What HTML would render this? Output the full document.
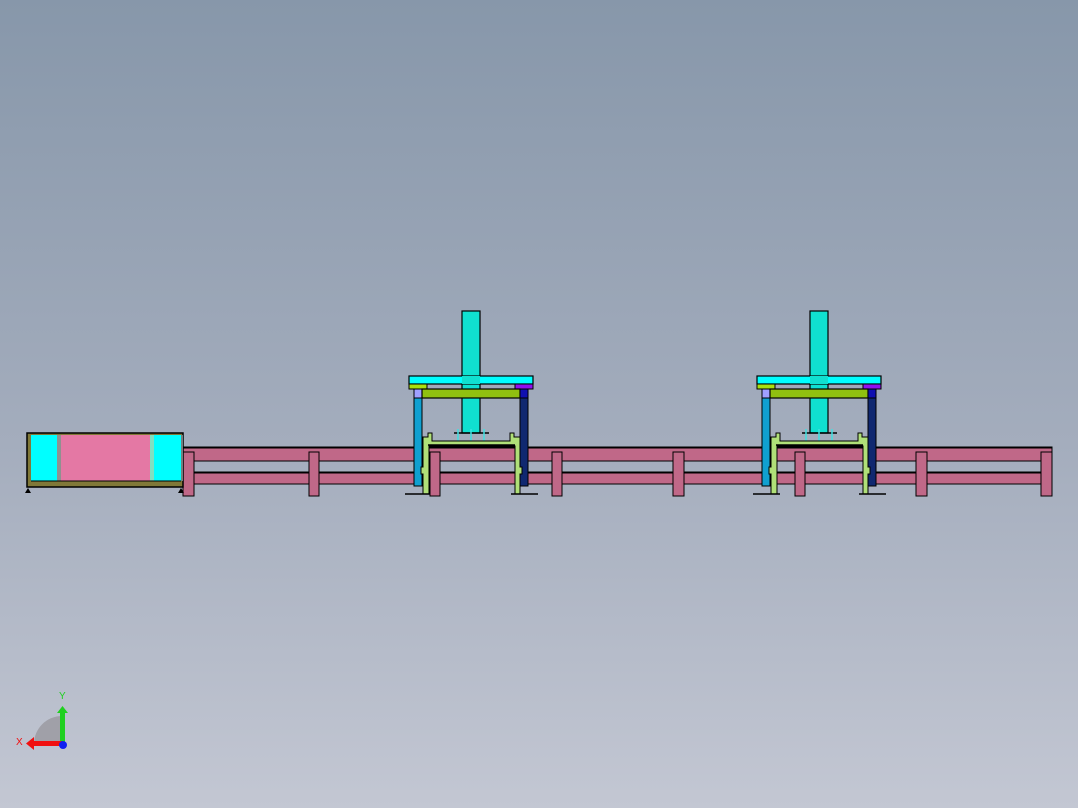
<!DOCTYPE html>
<html><head><style>html,body{margin:0;padding:0}body{width:1078px;height:808px;overflow:hidden;background:linear-gradient(#8797aa,#a4adbd 55%,#c3c7d3)}</style></head>
<body>
<svg width="1078" height="808" viewBox="0 0 1078 808" xmlns="http://www.w3.org/2000/svg" style="position:absolute;left:0;top:0">
<defs>
<g id="gantry">
  <rect x="462" y="311" width="18" height="122" fill="#10e0d0" stroke="#000" stroke-width="1.2"/>
  <rect x="409" y="376" width="124" height="8" fill="#00ffff" stroke="#000" stroke-width="1.2"/>
  <rect x="462" y="376" width="18" height="8" fill="#10e0d0"/>
  <rect x="409" y="384" width="18" height="5" fill="#a8e010" stroke="#000" stroke-width="1"/>
  <rect x="515" y="384" width="18" height="5" fill="#9010f0" stroke="#000" stroke-width="1"/>
  <rect x="414" y="389" width="8" height="9" fill="#a0a0ff" stroke="#000" stroke-width="1"/>
  <rect x="422" y="389" width="98" height="9" fill="#90c010" stroke="#000" stroke-width="1.2"/>
  <rect x="520" y="389" width="8" height="9" fill="#1010b0" stroke="#000" stroke-width="1"/>
  <rect x="414" y="398" width="8" height="88" fill="#10a0d0" stroke="#000" stroke-width="1"/>
  <rect x="520" y="398" width="8" height="88" fill="#102870" stroke="#000" stroke-width="1"/>
  <line x1="454" y1="433" x2="489" y2="433" stroke="#000" stroke-width="1.5"/>
  <g stroke="#40e0e0" stroke-width="1.5"><line x1="458" y1="429" x2="458" y2="441"/><line x1="471" y1="429" x2="471" y2="441"/><line x1="484" y1="429" x2="484" y2="441"/></g>
  <path d="M423 494 V474 H421 V467 H423 V437 H428 V433 H432 V441 H510 V433 H514 V437 H520 V467 H522 V474 H520 V494 H515 V446 H429 V494 Z" fill="#b0e078" stroke="#000" stroke-width="1"/>
  <line x1="428" y1="445" x2="515" y2="445" stroke="#000" stroke-width="1.5"/>
  <line x1="405" y1="494" x2="432" y2="494" stroke="#000" stroke-width="1.5"/>
  <line x1="511" y1="494" x2="538" y2="494" stroke="#000" stroke-width="1.5"/>
</g>
</defs>
<!-- conveyor -->
<rect x="183" y="447" width="869" height="14" fill="#c06888" stroke="#000" stroke-width="1"/>
<line x1="183" y1="447.5" x2="1052" y2="447.5" stroke="#000" stroke-width="2"/>
<rect x="183" y="472" width="869" height="12" fill="#c06888" stroke="#000" stroke-width="1"/>
<line x1="183" y1="472.5" x2="1052" y2="472.5" stroke="#000" stroke-width="2"/>
<g fill="#c06888" stroke="#000" stroke-width="1">
<rect x="183" y="452" width="11" height="44"/><rect x="309" y="452" width="10" height="44"/>
<rect x="552" y="452" width="10" height="44"/><rect x="673" y="452" width="11" height="44"/>
<rect x="916" y="452" width="11" height="44"/><rect x="1041" y="452" width="11" height="44"/>
</g>
<use href="#gantry"/>
<use href="#gantry" x="348"/>
<g fill="#c06888" stroke="#000" stroke-width="1">
<rect x="430" y="452" width="10" height="44"/><rect x="795" y="452" width="10" height="44"/>
</g>
<!-- left box -->
<rect x="27" y="433" width="156" height="54" fill="#807838" stroke="#000" stroke-width="1.5"/>
<rect x="31" y="435" width="26" height="46" fill="#00ffff"/>
<rect x="57" y="435" width="4" height="46" fill="#909090"/>
<rect x="61" y="435" width="89" height="46" fill="#e478a4"/>
<rect x="150" y="435" width="4" height="46" fill="#80e0c0"/>
<rect x="154" y="435" width="27" height="46" fill="#00ffff"/>
<rect x="181" y="435" width="2" height="46" fill="#708080"/>
<line x1="31" y1="481" x2="181" y2="481" stroke="#000" stroke-width="1"/>
<path d="M25 493 L28 488 L31 493 Z M178 493 L181 488 L184 493 Z" fill="#000"/>
<!-- triad -->
<path d="M62 716 A28 28 0 0 0 34 744 L62 744 Z" fill="#a0a0a8"/>
<rect x="60" y="712" width="5" height="32" fill="#20d020"/>
<path d="M57 713 L62.5 706 L68 713 Z" fill="#20d020"/>
<rect x="34" y="741" width="28" height="5" fill="#f01010"/>
<path d="M34 737 L26 743.5 L34 750 Z" fill="#f01010"/>
<circle cx="63" cy="745" r="4" fill="#1020f0"/>
<text x="59" y="699" font-family="Liberation Sans, sans-serif" font-size="10" fill="#20d020">Y</text>
<text x="16" y="745" font-family="Liberation Sans, sans-serif" font-size="10" fill="#f01010">X</text>
</svg>
</body></html>
